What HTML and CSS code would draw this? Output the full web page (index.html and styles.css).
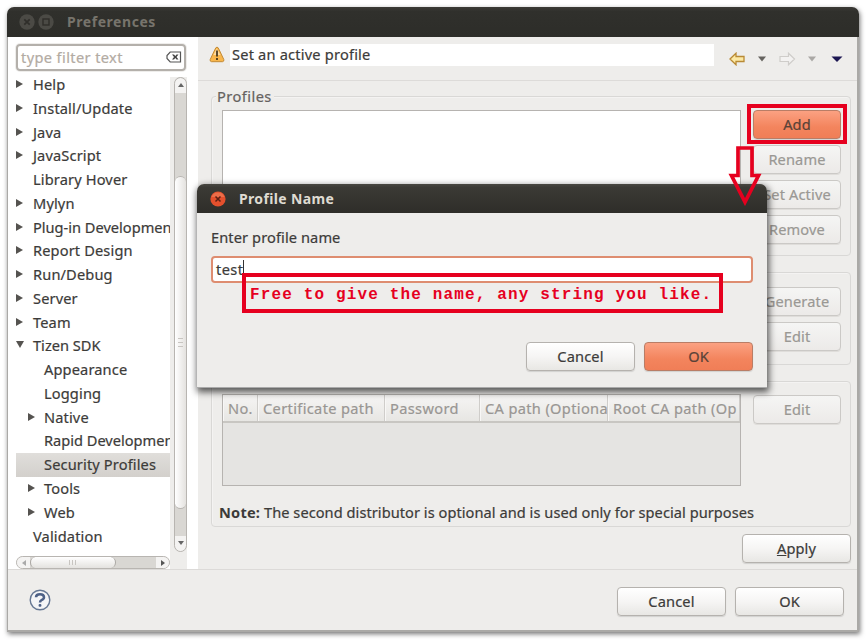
FILE: index.html
```html
<!DOCTYPE html>
<html lang="en">
<head>
<meta charset="utf-8">
<title>Preferences</title>
<link rel="stylesheet" href="styles.css">
</head>
<body>
<div class="window">
  <header class="titlebar">
    <svg class="winbtns" width="36" height="16" viewBox="0 0 36 16"><circle cx="8" cy="8" r="7.7" fill="#4b4a45"/><circle cx="27" cy="8" r="7.7" fill="#4b4a45"/><path d="M5.3 5.3l5.4 5.4M10.7 5.3l-5.4 5.4" stroke="#2f2e2a" stroke-width="1.7"/><rect x="24" y="5" width="6" height="6" fill="none" stroke="#2f2e2a" stroke-width="1.4"/></svg>
    <span class="title wide">Preferences</span>
  </header>
  <div class="main">
    <aside class="sidebar">
      <div class="filter"><span>type filter text</span><svg width="16" height="12" viewBox="0 0 16 12"><path d="M4.2 1H14.5V11H4.2L1 7.5v-3z" fill="#fff" stroke="#555" stroke-width="1.2"/><path d="M6 3.5h2l1.3 1.4 1.2-1.4h2l-2 2.5 2 2.5h-2L9.300 7.100 8 8.500H6L8 6z" fill="#444"/></svg></div>
      <div class="treebox">
        <ul class="tree">
          <li class="r">Help</li>
          <li class="r">Install/Update</li>
          <li class="r">Java</li>
          <li class="r">JavaScript</li>
          <li>Library Hover</li>
          <li class="r">Mylyn</li>
          <li class="r tight">Plug-in Developmen</li>
          <li class="r">Report Design</li>
          <li class="r">Run/Debug</li>
          <li class="r">Server</li>
          <li class="r">Team</li>
          <li class="d tight">Tizen SDK</li>
          <li class="sub">Appearance</li>
          <li class="sub">Logging</li>
          <li class="sub r">Native</li>
          <li class="sub tight">Rapid Developmen</li>
          <li class="sub sel">Security Profiles</li>
          <li class="sub r">Tools</li>
          <li class="sub r">Web</li>
          <li>Validation</li>
        </ul>
        <div class="vscroll"><div class="track"><i class="up"></i><b></b><i class="down"></i></div></div>
      </div>
      <div class="hrow"><div class="hscroll"><i class="left"></i><b></b><i class="right"></i></div><div class="corner"></div></div>
    </aside>
    <section class="content">
      <div class="head">
        <svg class="warn" width="16" height="17" viewBox="0 0 16 17"><path d="M8 1.200Q9.200 1.200 9.800 3L14.800 13.500Q15.300 15.500 13.500 15.700H2.500Q.7 15.500 1.200 13.500L6.200 3Q6.800 1.200 8 1.200z" fill="#f8b64c" stroke="#c38a35" stroke-width="1"/><path d="M7.800 2.500L4.500 9h7z" fill="#fbdca4"/><path d="M8 4.500v6M8 12v2" stroke="#3d3019" stroke-width="1.700"/></svg>
        <div class="msg">Set an active profile</div>
        <svg class="nav" width="114" height="14" viewBox="0 0 114 14"><path d="M1 7L7 1.200V4.500H15V9.500H7V12.800z" fill="#fce9a4" stroke="#b98a35" stroke-width="1.300"/><path d="M29 4.500h8l-4 5z" fill="#65635f"/><path d="M65.500 7L59.500 1.200V4.500H51V9.500H59.500V12.800z" fill="#f3f2f1" stroke="#cfcdca" stroke-width="1.200"/><path d="M79 4.500h8l-4 5z" fill="#aaa8a5"/><path d="M102.500 4.500h11l-5.500 5.500z" fill="#1c1752"/></svg>
      </div>
      <div class="body">
        <fieldset class="group g1">
          <legend>Profiles</legend>
          <div class="list"></div>
          <div class="btns"><div class="btn hot">Add</div><div class="btn off">Rename</div><div class="btn off">Set Active</div><div class="btn off">Remove</div></div>
        </fieldset>
        <div class="group g2">
          <div class="btns"><div class="btn off gen">Generate</div><div class="btn off">Edit</div></div>
        </div>
        <div class="group g3">
          <div class="g3row">
            <div class="table">
              <div class="thead"><span>No.</span><span>Certificate path</span><span>Password</span><span>CA path (Optiona</span><span>Root CA path (Op</span></div>
            </div>
            <div class="btns"><div class="btn off">Edit</div></div>
          </div>
          <p class="note"><strong>Note:</strong> <span>The second distributor is optional and is used only for special purposes</span></p>
        </div>
        <div class="btn apply"><span><u>A</u>pply</span></div>
      </div>
    </section>
  </div>
  <footer class="foot">
    <svg class="help" width="22" height="22" viewBox="0 0 22 22"><circle cx="11" cy="11" r="9.800" fill="#f4f5f7" stroke="#667894" stroke-width="1.400"/><path d="M7 8.200Q7 5.200 11 5.200T15 8.200Q15 10 12.500 11.100 11 11.800 11 13.400" fill="none" stroke="#4d6187" stroke-width="2.500"/><rect x="9.600" y="15" width="2.800" height="2.800" rx="1" fill="#4d6187"/></svg>
    <div class="btn">Cancel</div><div class="btn">OK</div>
  </footer>
</div>
<div class="dialog">
  <header class="dtitle">
    <svg width="16" height="16" viewBox="0 0 16 16"><circle cx="8" cy="8" r="7.600" fill="#e4502d"/><path d="M1.500 6a7 7 0 0 1 13 0z" fill="#f17a55" opacity=".7"/><path d="M5.500 5.500l5 5M10.500 5.500l-5 5" stroke="#5b2014" stroke-width="1.500"/></svg>
    <span class="title">Profile Name</span>
  </header>
  <div class="dbody">
    <label>Enter profile name</label>
    <div class="input">test<i></i></div>
    <div class="dbtns"><div class="btn">Cancel</div><div class="btn hot">OK</div></div>
  </div>
</div>
<div class="mark addmark"></div>
<div class="mark tip">Free to give the name, any string you like.</div>
<svg class="arrow" width="34" height="62" viewBox="0 0 34 62"><path d="M10 4H24V31.500H30.500L17 58 3.500 31.500H10z" fill="none" stroke="#e6001f" stroke-width="3.700"/></svg>
</body>
</html>
```
FILE: styles.css
```css
* { box-sizing: border-box; }
body { margin: 0; width: 866px; height: 640px; overflow: hidden; background: #fff; font: 14.6px/20px "Noto Sans", "Open Sans", sans-serif; letter-spacing: .14px; -webkit-text-stroke: .2px; color: #3c3b39; position: relative; white-space: nowrap; }
.window { margin: 0 0 0 7px; position: relative; top: 7px; width: 852px; height: 625px; border-radius: 7px 7px 0 0; background: #eeedeb; box-shadow: 1px 2px 5px rgba(0,0,0,.55); display: flex; flex-direction: column; overflow: visible; }
.titlebar { height: 30px; flex: none; background: linear-gradient(#3b3a36, #30302c 15%, #2d2d29); border-radius: 7px 7px 0 0; display: flex; align-items: center; padding-left: 12px; color: #77746c; }
.winbtns { flex: none; margin-right: 12px; }
.title { font-weight: 700; font-size: 14px; letter-spacing: .35px; -webkit-text-stroke: 0; }
.title.wide { letter-spacing: .55px; }
.main { height: 532px; flex: none; display: flex; border: solid #aaa9a6; border-width: 0 2px 0 1px; }
.sidebar { width: 190px; background: #fff; padding: 7px 0 0 8px; display: flex; flex-direction: column; flex: none; }
.filter { width: 170px; height: 27px; border: 2px solid #b4b0ab; border-radius: 4px; padding: 0 2px 1px 3px; display: flex; align-items: center; justify-content: space-between; color: #b3aba3; flex: none; letter-spacing: .38px; box-shadow: 0 0 0 1px #eeedeb; }
.treebox { height: 482px; display: flex; flex: none; }
.tree { width: 154px; margin: 0; padding: 2px 0 0; list-style: none; overflow: hidden; }
.tree li { height: 23.770px; line-height: 23.500px; padding-left: 17px; display: block; position: relative; }
.tree li.tight { letter-spacing: 0; }
.tree li.sub { padding-left: 28px; }
.tree .r::before, .tree .d::before { content: ""; position: absolute; left: 0; top: 7px; border: solid transparent; border-width: 4px 0 4px 7px; }
.tree .r::before { border-left-color: #555350; }
.tree .sub.r::before { left: 12px; }
.tree .d::before { border-width: 7px 4px 0; border-top-color: #555350; }
.tree .sel { background: linear-gradient(#e0dedb, #d3d0cc); }
.vscroll { width: 17px; background: #eeedeb; margin-top: 6px; padding-left: 4px; }
.track { height: 475px; width: 13px; border: 1px solid #b8b5b1; border-radius: 7px; background: #d9d7d3; display: flex; flex-direction: column; justify-content: space-between; position: relative; overflow: hidden; }
.track i { height: 15px; background: #f4f3f2; position: relative; border-radius: 0 0 6px 6px; }
.track .up { border-radius: 6px 6px 0 0; }
.track i::after, .hscroll i::after { content: ""; position: absolute; border: solid transparent; left: 2.500px; top: 5px; }
.track .up::after { border-width: 0 3px 4px; border-bottom-color: #666; }
.track .down::after { border-width: 4px 3px 0; border-top-color: #666; }
.track b { position: absolute; top: 98px; left: 0; width: 11px; height: 333px; border-radius: 6px; border: solid #b8b5b1; border-width: 1px 0; background: repeating-linear-gradient(#c8c5c1 0 1px, transparent 1px 4px) center / 5px 9px no-repeat, linear-gradient(90deg, #fff, #e4e2df); }
.hrow { display: flex; height: 16px; width: 171px; }
.hscroll { margin-top: 3px; width: 154px; height: 13px; border: 1px solid #b8b5b1; border-radius: 7px; background: #d9d7d3; display: flex; justify-content: space-between; position: relative; overflow: hidden; }
.hscroll i { width: 13px; background: #f4f3f2; position: relative; }
.hscroll .left::after { border-width: 3px 4px 3px 0; border-right-color: #aaa; left: 5px; top: 3px; }
.hscroll .right::after { border-width: 3px 0 3px 4px; border-left-color: #555; left: 5px; top: 3px; }
.hscroll b { position: absolute; left: 13px; top: 0; width: 86px; height: 11px; border-radius: 6px; border: solid #aaa7a3; border-width: 0 1px; background: repeating-linear-gradient(90deg, #c8c5c1 0 1px, transparent 1px 3px) center / 8px 5px no-repeat, linear-gradient(#fff, #e4e2df); }
.corner { width: 17px; background: #eeedeb; }
.content { flex: 1; display: flex; flex-direction: column; min-width: 0; }
.head { height: 44px; border-bottom: 1px solid #dddbd9; flex: none; display: flex; padding-left: 11px; }
.warn { margin-top: 9px; }
.msg { margin: 7px 16px 0 5px; width: 484px; height: 22px; line-height: 21px; padding-left: 2px; background: #fff; letter-spacing: .2px; }
.nav { margin-top: 15px; margin-left: -1px; }
.body { padding: 15px 6px 0 13px; display: flex; flex-direction: column; }
.group { border: 1px solid #d9d8d6; border-radius: 4px; margin: 0; padding: 0; width: 640px; display: flex; box-shadow: inset 1px 1px 0 #f4f3f2; position: relative; flex: none; }
.g1 { height: 160px; padding: 13px 0 0 10px; }
.g1 legend { position: absolute; left: 4px; top: -10px; padding: 0 2px 0 1px; background: #eeedeb; color: #65625f; line-height: 18px; letter-spacing: .45px; }
.list { width: 519px; height: 130px; background: #fff; border: 1px solid #b6b3b0; }
.btns { margin-left: 12px; display: flex; flex-direction: column; gap: 6px; }
.btn { width: 109px; height: 29px; border: 1px solid #b5b2ae; border-radius: 4px; background: linear-gradient(#fff, #f6f5f4 50%, #e8e7e4); display: flex; align-items: center; justify-content: center; box-shadow: 0 1px 1px rgba(0,0,0,.12); flex: none; line-height: 20px; padding-bottom: 2px; }
.btns .btn { width: 88px; }
.off { color: #9a9894; border-color: #cbc9c6; background: linear-gradient(#f5f5f4, #eceae8); box-shadow: 0 1px 0 #dfddda; }
.hot { color: #594238; border-color: #b97d66; background: linear-gradient(#fba182, #f3845d 60%, #f07e57); }
.g2 { margin-top: 16px; height: 93px; padding: 14px 0 0 529px; }
.g3 { margin-top: 16px; height: 146px; padding: 12px 0 0 10px; display: block; }
.g3row { display: flex; }
.table { width: 519px; height: 92px; border: 1px solid #b6b3b0; background: #e5e4e2; }
.g3row .btns { padding-top: 1px; }
.thead { height: 28px; border-bottom: 2px solid #c8c6c2; display: grid; grid-template-columns: 35px 127px 95px 128px 1fr; background: linear-gradient(#f6f5f4, #e7e6e3); line-height: 26px; color: #999693; letter-spacing: .35px; }
.thead span { overflow: hidden; padding-left: 5px; border-right: 1px solid #cfcdca; box-shadow: inset 1px 0 #f8f7f6; }
.note { margin: 16px 0 0 -3px; line-height: 20px; letter-spacing: .05px; }
.note strong { letter-spacing: .2px; -webkit-text-stroke: 0; }
.apply { margin: 7px 0 0 auto; align-self: flex-end; }
.foot { height: 63px; border: solid #aaa9a6; border-width: 0 2px 2px 1px; box-shadow: inset 0 1px #dcdad8; display: flex; padding: 18px 13px 0 21px; gap: 9px; }
.foot .help { margin-right: auto; margin-top: 2px; }
.dialog { position: absolute; left: 197px; top: 184px; width: 570px; height: 204px; border-radius: 7px 7px 0 0; background: #eeedeb; box-shadow: 1px 3px 7px 1px rgba(0,0,0,.65); border-bottom: 1px solid #aaa; }
.dtitle { height: 29px; border-radius: 7px 7px 0 0; background: linear-gradient(#484741, #3b3a35 12%, #2e2d29); display: flex; align-items: center; gap: 13px; padding-left: 13px; color: #dfdbd2; }
.dbody { padding: 14px 14px 0; display: flex; flex-direction: column; }
.dbody label { letter-spacing: .1px; }
.input { margin-top: 9px; height: 27px; border: 2px solid #de8d70; border-radius: 4px; background: #fff; display: flex; align-items: center; padding: 0 0 2px 3px; letter-spacing: .4px; }
.input i { width: 1px; height: 17px; background: #333; }
.dbtns { display: flex; justify-content: flex-end; gap: 9px; margin-top: 59px; }
.mark { position: absolute; border: 4px solid #e6001f; }
.addmark { left: 747px; top: 104px; width: 100px; height: 40px; }
.tip { left: 242px; top: 273px; width: 481px; height: 40px; color: #e6001f; font: 700 16px/37px "Liberation Mono", monospace; letter-spacing: 1.150px; padding-left: 4px; -webkit-text-stroke: 0; }
.arrow { position: absolute; left: 728px; top: 144px; }
```
